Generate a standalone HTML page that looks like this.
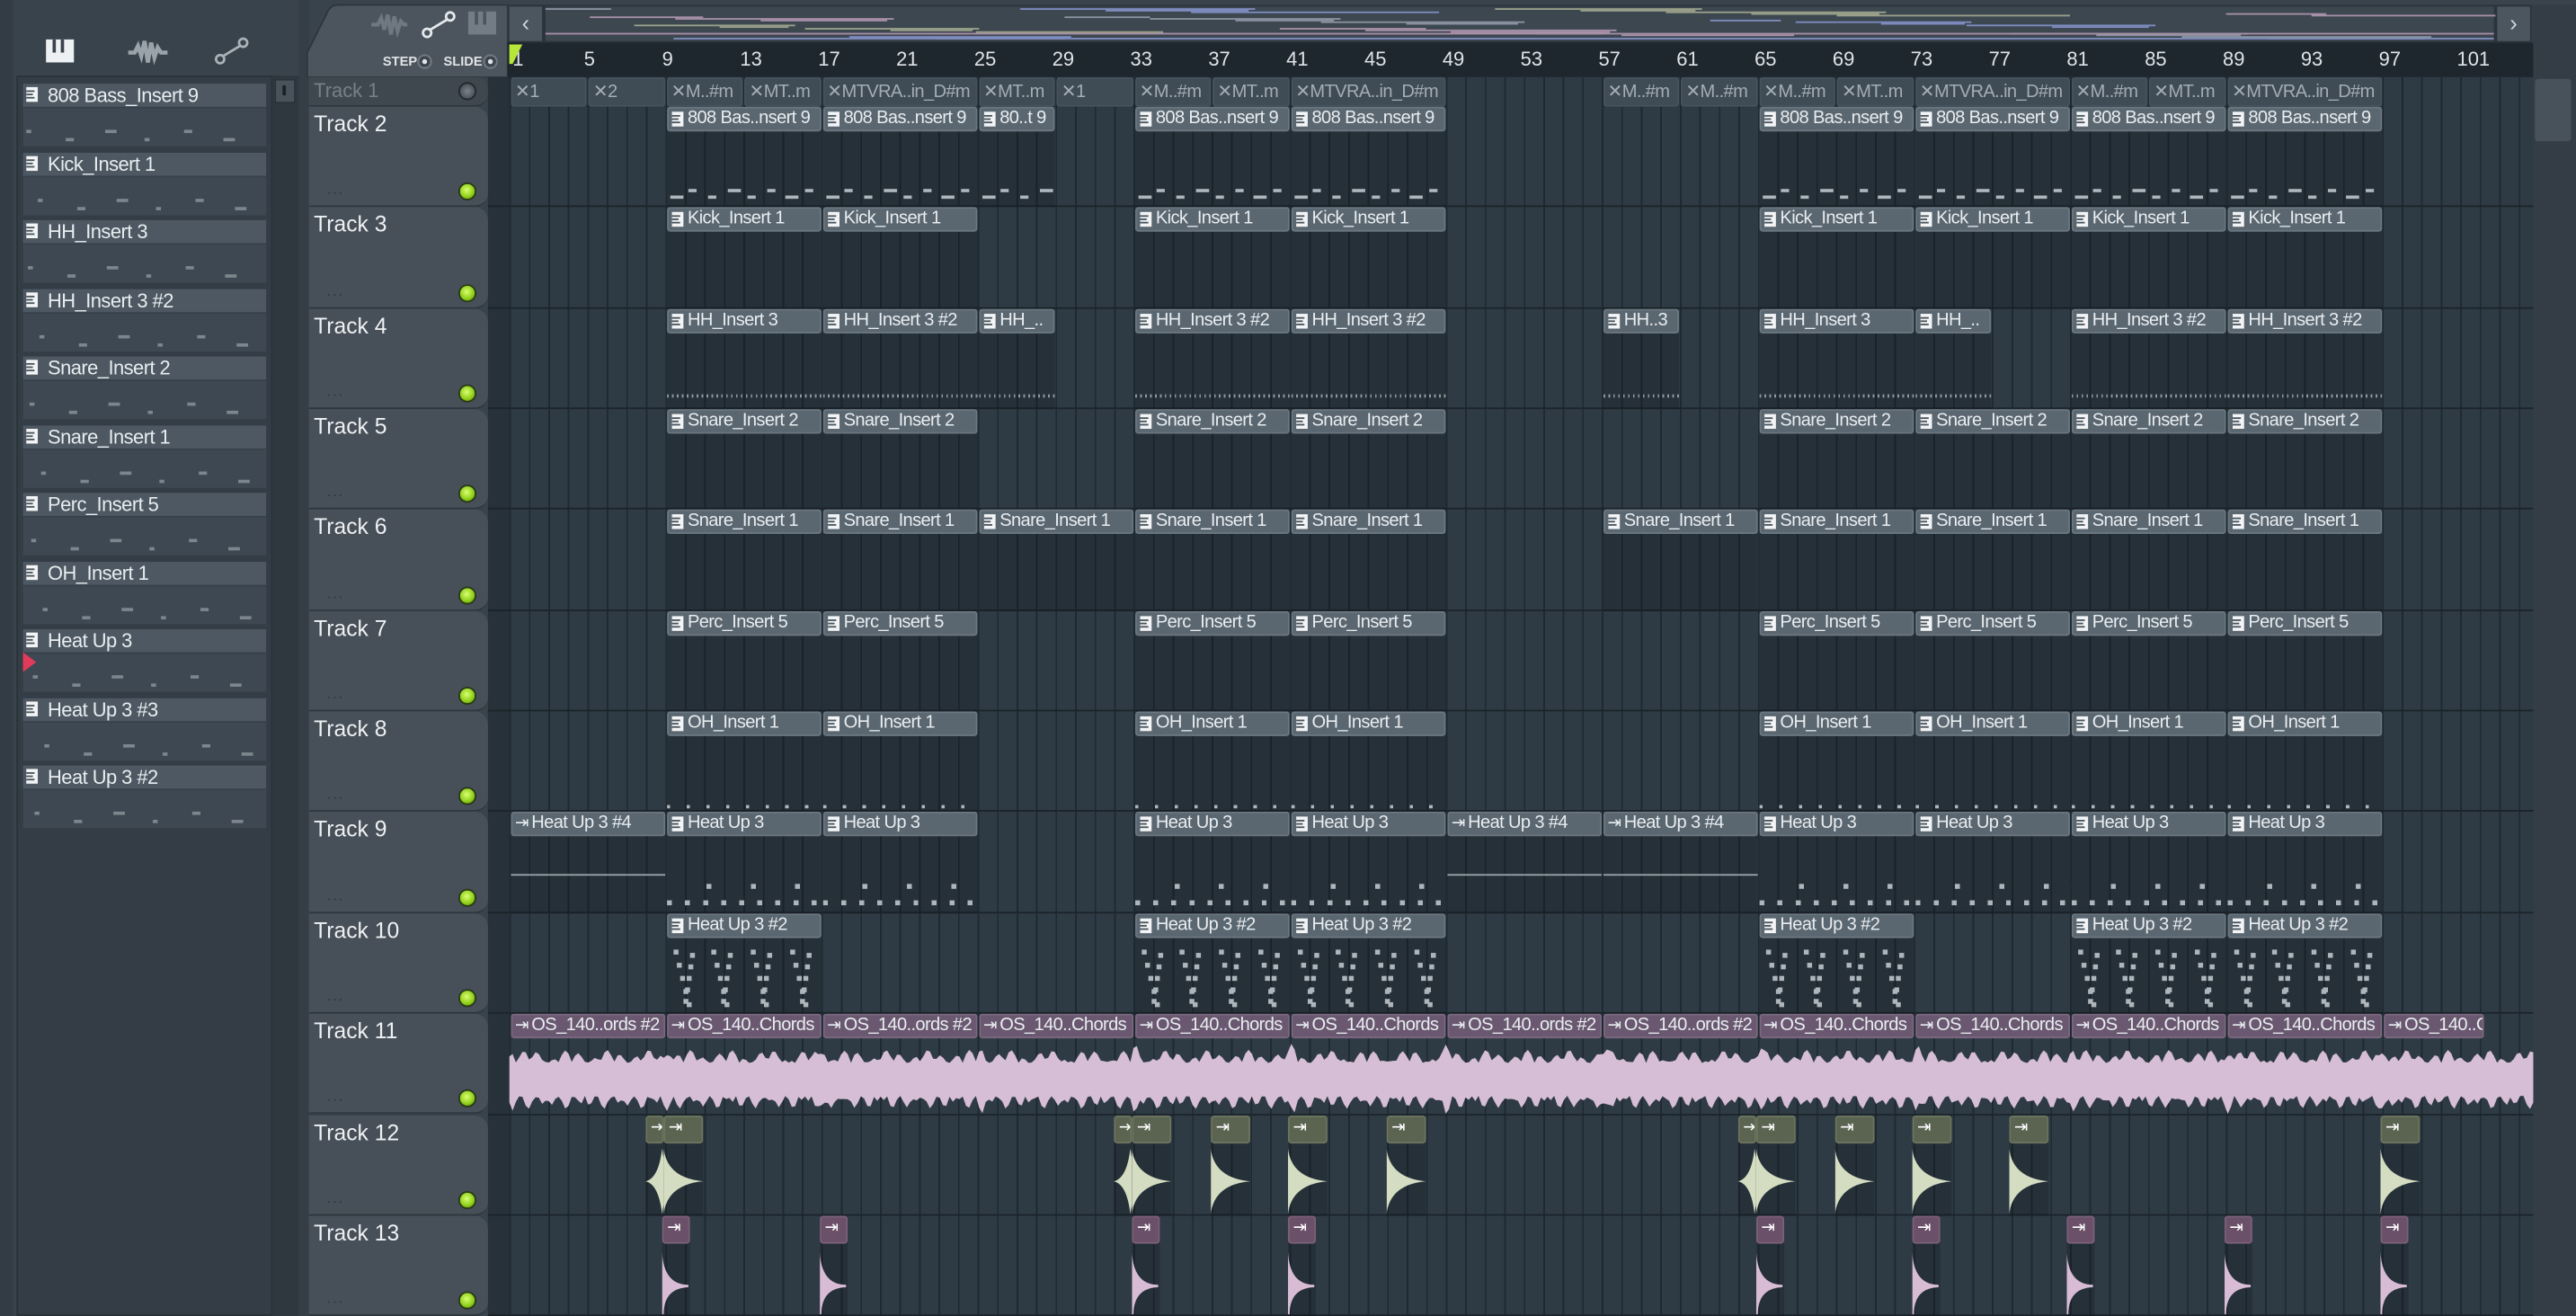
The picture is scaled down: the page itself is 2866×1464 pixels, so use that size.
<!DOCTYPE html>
<html><head><meta charset="utf-8"><style>
*{margin:0;padding:0;box-sizing:border-box}
html,body{width:2866px;height:1464px;overflow:hidden;background:#38424b}
#s{position:absolute;left:0;top:0;width:1568px;height:801px;transform:scale(1.82781,1.82772);transform-origin:0 0;background:#39434c;font-family:"Liberation Sans Narrow","Liberation Sans",sans-serif;color:#e4e9ec;overflow:hidden}
.a{position:absolute}
.ico{position:absolute;width:7px;height:9px;background:#f2f4f5;left:2px;top:2px}
.ico i{position:absolute;left:0;height:1px;background:#4a555e}
.cl{position:absolute;overflow:hidden}
.ch{position:absolute;left:0;right:0;top:0;height:15px;background:#5a6670;border-radius:2px;border:1px solid #6b7780;font-size:11px;letter-spacing:-0.35px;line-height:13px;white-space:nowrap;padding-left:12px;color:#e8edf0;overflow:hidden}
.cb{position:absolute;left:0;right:0;top:15px;bottom:0;background:rgba(10,16,22,.25)}
.th{position:absolute;left:188px;width:109px;background:#474f58;border-radius:0 8px 8px 0;border-bottom:1px solid #2e363d}
.th b{position:absolute;left:3px;top:3px;font-weight:normal;font-size:13.5px;color:#eef1f3}
.led{position:absolute;left:91px;width:11px;height:11px;border-radius:50%;background:radial-gradient(circle at 45% 40%,#d8ff70,#8ccc16 60%,#466a0a);border:1px solid #2a3a18}
.dots{position:absolute;left:11px;font-size:9px;color:#2d343a;letter-spacing:1px}
.li{position:absolute;left:14px;width:148px;height:38px;background:#3e4852}
.li .h{position:absolute;left:0;right:0;top:0;height:15px;background:#4d5862;font-size:12px;letter-spacing:-0.3px;line-height:15px;padding-left:15px;color:#e8edf0;border-bottom:1px solid #36404a}
</style></head><body><div id="s">
<div class="a" style="left:0;top:0;width:8px;height:801px;background:#333c44"></div>
<div class="a" style="left:28px;top:24px;width:17px;height:14px;background:#eef1f3"></div>
<div class="a" style="left:32px;top:24px;width:2px;height:8px;background:#39434c"></div>
<div class="a" style="left:37px;top:24px;width:2px;height:8px;background:#39434c"></div>
<svg class="a" style="left:78px;top:21px" width="24" height="22"><path d="M0 11H4L6 7 8 13 10 4 12 17 14 5 16 14 18 8 20 11H24" stroke="#9aa3aa" stroke-width="2.5" fill="none"/></svg>
<svg class="a" style="left:130px;top:22px" width="22" height="18"><circle cx="4" cy="14" r="2.5" stroke="#aab2b8" fill="none" stroke-width="1.5"/><circle cx="18" cy="4" r="2.5" stroke="#aab2b8" fill="none" stroke-width="1.5"/><path d="M6 12L16 6" stroke="#aab2b8" stroke-width="1.5"/></svg>
<div class="a" style="left:10px;top:46px;width:156px;height:755px;background:#343d46;border:1px solid #2a3239"></div>
<div class="a" style="left:166px;top:46px;width:16px;height:755px;background:#2f383f"></div>
<div class="a" style="left:167px;top:48px;width:13px;height:15px;background:#48525b;border:1px solid #2a3239"></div>
<div class="a" style="left:172px;top:52px;width:2px;height:6px;background:#1a2025"></div>
<div class="a" style="left:182px;top:0;width:6px;height:801px;background:#353e46"></div>
<div id="left"></div>
<svg class="a" style="left:13px;top:396px" width="10" height="14"><path d="M1 1L9 7 1 13Z" fill="#e23a5a"/></svg>
<svg class="a" style="left:186px;top:2px" width="124" height="45"><path d="M1 45V30L14 4Q16 1 20 1H123V45Z" fill="#4c555e" stroke="#2d353c"/></svg>
<svg class="a" style="left:226px;top:7px" width="22" height="16"><path d="M0 8H4L6 4 8 11 10 2 12 14 14 3 16 12 18 6 20 8H22" stroke="#6f7880" stroke-width="2.3" fill="none"/></svg>
<svg class="a" style="left:256px;top:6px" width="22" height="18"><circle cx="4" cy="14" r="2.5" stroke="#e6eaed" fill="none" stroke-width="1.5"/><circle cx="18" cy="4" r="2.5" stroke="#e6eaed" fill="none" stroke-width="1.5"/><path d="M6 12L16 6" stroke="#e6eaed" stroke-width="1.5"/></svg>
<div class="a" style="left:285px;top:7px;width:17px;height:14px;background:#737c84"></div>
<div class="a" style="left:289px;top:7px;width:2px;height:8px;background:#4c555e"></div>
<div class="a" style="left:294px;top:7px;width:2px;height:8px;background:#4c555e"></div>
<div class="a" style="left:233px;top:33px;font-size:8px;font-weight:bold;color:#dfe3e6;font-family:'Liberation Sans',sans-serif">STEP</div>
<div class="a" style="left:254px;top:33px;width:9px;height:9px;border-radius:50%;border:1.5px solid #6f7880;background:#e0e4e7;box-shadow:inset 0 0 0 2px #3c454d"></div>
<div class="a" style="left:270px;top:33px;font-size:8px;font-weight:bold;color:#dfe3e6;font-family:'Liberation Sans',sans-serif">SLIDE</div>
<div class="a" style="left:294px;top:33px;width:9px;height:9px;border-radius:50%;border:1.5px solid #6f7880;background:#e0e4e7;box-shadow:inset 0 0 0 2px #3c454d"></div>
<div class="a" style="left:309px;top:3px;width:22px;height:23px;background:#4c565f;border:1px solid #2b333a;color:#cfd5d9;font-size:14px;text-align:center;line-height:20px">‹</div>
<div class="a" style="left:331px;top:3px;width:1188px;height:23px;background:#3c4750;border:1px solid #2b333a"></div>
<div id="ov"></div>
<div class="a" style="left:1519px;top:3px;width:22px;height:23px;background:#4c565f;border:1px solid #2b333a;color:#cfd5d9;font-size:14px;text-align:center;line-height:20px">›</div>
<div class="a" style="left:1541px;top:3px;width:27px;height:23px;background:#343d45"></div>
<div class="a" style="left:309px;top:26px;width:1259px;height:21px;background:#1f272e"></div>
<div id="rul"></div>
<svg class="a" style="left:309px;top:27px" width="10" height="12"><path d="M1 0H9L3 12H1Z" fill="#b6e63a"/></svg>
<div class="a" style="left:297px;top:47px;width:13px;height:754px;background:#27313a"></div>
<div class="a" style="left:310px;top:47px;width:1232px;height:754px;background-color:#2e3b45;background-image:repeating-linear-gradient(90deg,#1f2930 0,#1f2930 1px,transparent 1px,transparent 11.875px)"></div>
<div class="a" style="left:1542px;top:26px;width:26px;height:775px;background:#343d45"></div>
<div class="a" style="left:1543px;top:48px;width:22px;height:38px;background:#48525b;border-radius:2px"></div>
<div id="rows"></div>
<div id="clips"></div>
</div>
<script>
const X=b=>310+(b-1)*11.875;
let h='';
const names=["808 Bass_Insert 9","Kick_Insert 1","HH_Insert 3","HH_Insert 3 #2","Snare_Insert 2","Snare_Insert 1","Perc_Insert 5","OH_Insert 1","Heat Up 3","Heat Up 3 #3","Heat Up 3 #2"];
const ic='<span class="ico"><i style="top:2px;width:5px"></i><i style="top:4px;width:4px"></i><i style="top:6px;width:5px"></i></span>';
names.forEach((n,i)=>{let y=51+i*41.5;h+=`<div class="li" style="top:${y}px"><div class="h">${ic}${n}</div></div>`;
 for(let k=0;k<6;k++)h+=`<div class="a" style="left:${16+k*24+(i*7)%13}px;top:${y+28+(k%2)*5}px;width:${3+k%3*2}px;height:2px;background:#7d868d"></div>`;});
document.getElementById('left').innerHTML=h;
h='';for(let b=1;b<=101;b+=4)h+=`<div class="a" style="left:${X(b)+(b==1?2:-2)}px;top:29px;font-size:12px;color:#dfe4e8">${b}</div>`;
document.getElementById('rul').innerHTML=h;
h='';const oc=['#8b93a0','#a890a8','#9aa08a','#7f8cc0'];
for(let i=0;i<40;i++){let y=5+(i*7)%19;let x=332+((i*131)%1100);h+=`<div class="a" style="left:${x}px;top:${y}px;width:${40+(i*37)%120}px;height:1px;background:${oc[i%4]}"></div>`}
h+=`<div class="a" style="left:332px;top:20px;width:1186px;height:1px;background:#a890a8"></div><div class="a" style="left:410px;top:23px;width:1108px;height:1px;background:#7f8cc0"></div>`;
document.getElementById('ov').innerHTML=h;
h='';const R=61.35;
h+=`<div class="th" style="top:47px;height:18px;background:#40484f;border-radius:0 8px 8px 0"><b style="top:1px;color:#77808a;font-size:12px">Track 1</b><div class="led" style="top:3px;background:radial-gradient(circle,#7a828a,#3a4148);border-color:#22282d"></div></div>`;
for(let n=2;n<=13;n++){let t=65+(n-2)*R;h+=`<div class="th" style="top:${t}px;height:${R}px"><b>Track ${n}</b><div class="led" style="top:${R-15}px"></div><div class="dots" style="top:${R-16}px">...</div></div>`;
 h+=`<div class="a" style="left:297px;top:${t+R-1}px;width:1245px;height:1px;background:#1c242a"></div>`}
document.getElementById('rows').innerHTML=h;
h='';
function clip(tr,b,len,label,opt={}){let top=tr==1?47:65+(tr-2)*R;let hh=tr==1?18:R;let l=X(b)+0.5,w=len*11.875-1;
 let hc=opt.hc||'#5a6670',bd=opt.bd||'#6b7780';
 let icon=opt.noicon?'':(opt.play?'<span style="position:absolute;left:2px;top:0;font-size:10px">⇥</span>':ic);
 h+=`<div class="cl" style="left:${l}px;top:${top}px;width:${w}px;height:${hh}px"><div class="cb" ${opt.nob?'style="background:none"':''}></div><div class="ch" style="background:${hc};border-color:${bd};${opt.hs||''}">${icon}${label}</div>${opt.inner||''}</div>`;}
[[1,4,'1'],[5,4,'2'],[9,4,'M..#m'],[13,4,'MT..m'],[17,8,'MTVRA..in_D#m'],[25,4,'MT..m'],[29,4,'1'],[33,4,'M..#m'],[37,4,'MT..m'],[41,8,'MTVRA..in_D#m'],[57,4,'M..#m'],[61,4,'M..#m'],[65,4,'M..#m'],[69,4,'MT..m'],[73,8,'MTVRA..in_D#m'],[81,4,'M..#m'],[85,4,'MT..m'],[89,8,'MTVRA..in_D#m']].forEach(c=>clip(1,c[0],c[1],'✕'+c[2],{noicon:1,hc:'#3f4b55',bd:'#46525c',hs:'height:18px;padding-left:2px;color:#a4adb4;line-height:16px'}));
const std=[9,17,33,41,65,73,81,89];
function pat(){let s='';for(let k=0;k<8;k++)s+=`<div class="a" style="left:${k*11.8+2}px;top:${k%2?50:54}px;width:${k%3?5:8}px;height:2px;background:#aeb6bc"></div>`;return s}
std.concat([25]).forEach(b=>clip(2,b,b==25?4:8,b==25?'80..t 9':'808 Bas..nsert 9',{inner:pat()}));
std.forEach(b=>clip(3,b,8,'Kick_Insert 1'));
[[9,8,'HH_Insert 3'],[17,8,'HH_Insert 3 #2'],[25,4,'HH_..'],[33,8,'HH_Insert 3 #2'],[41,8,'HH_Insert 3 #2'],[57,4,'HH..3'],[65,8,'HH_Insert 3'],[73,4,'HH_..'],[81,8,'HH_Insert 3 #2'],[89,8,'HH_Insert 3 #2']].forEach(c=>clip(4,c[0],c[1],c[2],{inner:'<div class="a" style="left:0;right:0;top:52px;height:2px;background:repeating-linear-gradient(90deg,#8d969d 0 1px,transparent 1px 3px)"></div>'}));
std.forEach(b=>clip(5,b,8,'Snare_Insert 2'));
std.concat([25,57]).forEach(b=>clip(6,b,8,'Snare_Insert 1'));
std.forEach(b=>clip(7,b,8,'Perc_Insert 5'));
std.forEach(b=>clip(8,b,8,'OH_Insert 1',{inner:'<div class="a" style="left:0;right:0;top:57px;height:2px;background:repeating-linear-gradient(90deg,#aeb6bc 0 2px,transparent 2px 12px)"></div>'}));
const hu='<div class="a" style="left:0;right:0;top:44px;height:3px;background:repeating-linear-gradient(90deg,transparent 0 24px,#aeb6bc 24px 27px)"></div><div class="a" style="left:0;right:0;top:54px;height:3px;background:repeating-linear-gradient(90deg,#aeb6bc 0 3px,transparent 3px 11px)"></div>';
[1,49,57].forEach(b=>clip(9,b,8,'Heat Up 3 #4',{play:1,inner:'<div class="a" style="left:0;right:0;top:38px;height:1px;background:#9aa3aa"></div>'}));
std.forEach(b=>clip(9,b,8,'Heat Up 3',{inner:hu}));
function h2(){let s='';const st=[[2,38],[4,42],[6,46],[8,50],[2,34],[5,30]];for(let g=0;g<4;g++)for(let k=0;k<5;k++){s+=`<div class="a" style="left:${g*23.75+4+k*2}px;top:${22+k*8}px;width:3px;height:3px;background:#aeb6bc"></div><div class="a" style="left:${g*23.75+14-k}px;top:${24+k*7}px;width:3px;height:3px;background:#aeb6bc"></div>`}return s}
[9,33,41,65,81,89].forEach(b=>clip(10,b,8,'Heat Up 3 #2',{inner:h2()}));
for(let b=1;b<=97;b+=8){let lab=[1,17,49,57].includes(b)?'OS_140..ords #2':'OS_140..Chords';let len=b==97?5.3:8;
 clip(11,b,len,lab,{play:1,hc:'#6a5870',bd:'#7b6880',nob:1})}
let p='M0 36';let W=1232;for(let x=0;x<=W;x+=2){let a=10+Math.abs(Math.sin(x*1.7)*Math.cos(x*0.37))*8+((x%95)<4?4:0);p+=`L${x} ${36-a}`}
for(let x=W;x>=0;x-=2){let a=10+Math.abs(Math.cos(x*1.3)*Math.sin(x*0.41))*8+((x%95)<4?4:0);p+=`L${x} ${36+a}`}
h+=`<svg class="a" style="left:310px;top:621px" width="1232" height="61"><path d="${p}Z" fill="#d6bed6"/></svg>`;
function sm(tr,x,w,hc,bd,wf,fc){let top=65+(tr-2)*R;h+=`<div class="cl" style="left:${x}px;top:${top}px;width:${w}px;height:${R}px"><div class="cb"></div><div class="ch" style="background:${hc};border-color:${bd};height:17px;padding-left:2px;font-size:10px;color:#fff">⇥</div><svg class="a" style="left:0;top:18px" width="${w}" height="43"><path d="${wf}" fill="${fc}"/></svg></div>`}
const kw='M0 22Q8 20 10 2Q12 20 24 22Q12 24 10 42Q8 24 0 22Z',kw2='M0 2Q2 20 24 22Q2 24 0 42Z';
[[393,11,kw],[404,24,kw2],[678,11,kw],[689,24,kw2],[737,24,kw2],[784,24,kw2],[844,24,kw2],[1058,11,kw],[1069,24,kw2],[1117,24,kw2],[1164,24,kw2],[1223,24,kw2],[1449,24,kw2]].forEach(c=>sm(12,c[0],c[1],'#5b6450','#6b745e',c[2],'#d4dcc2'));
[403,499,689,784,1069,1164,1258,1354,1449].forEach(x=>sm(13,x,17,'#6a5068','#7a6078','M0 4Q1 24 16 24V25.5Q1 26 1 42H0Z','#d8bcd6'));
document.getElementById('clips').innerHTML=h;
</script>
</body></html>
